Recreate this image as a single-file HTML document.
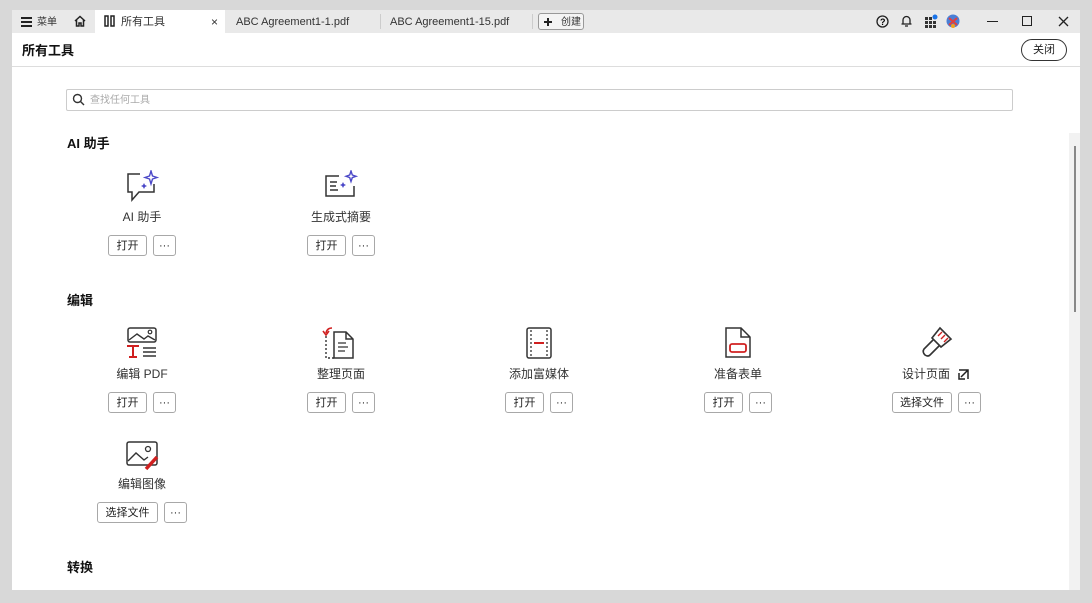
<!DOCTYPE html>
<html><head><meta charset="utf-8"><style>
*{margin:0;padding:0;box-sizing:border-box}
body{width:1092px;height:603px;background:#d8d8d8;position:relative;overflow:hidden;font-family:"Liberation Sans","Noto Sans CJK SC",sans-serif;color:#222}
.a{position:absolute}
.tabbar{left:12px;top:10px;width:1068px;height:23px;background:#e9e9e9}
.main{left:12px;top:33px;width:1068px;height:557px;background:#fff}
.t{font-size:11px;color:#333;white-space:nowrap;line-height:13px}
.btn{position:absolute;height:21px;border:1px solid #a8a8a8;border-radius:3px;background:#fff;font-size:11px;color:#222;text-align:center;line-height:20px}
.lbl{position:absolute;width:160px;text-align:center;font-size:12px;color:#333;line-height:14px}
.h{position:absolute;left:67px;font-size:13px;font-weight:bold;color:#111;line-height:15px}
svg{position:absolute}
</style></head><body>
<div class="a tabbar"></div>
<div class="a" style="left:95px;top:10px;width:130px;height:23px;background:#fff"></div>
<div class="a" style="left:380px;top:14px;width:1px;height:15px;background:#ccc"></div>
<div class="a" style="left:532px;top:14px;width:1px;height:15px;background:#ccc"></div>
<div class="a" style="left:21px;top:17px;width:11px;height:1.5px;background:#222"></div>
<div class="a" style="left:21px;top:21px;width:11px;height:1.5px;background:#222"></div>
<div class="a" style="left:21px;top:25px;width:11px;height:1.5px;background:#222"></div>
<div class="a t" style="left:37px;top:16px;font-size:10px">菜单</div>
<svg style="left:73px;top:14px" width="14" height="14" viewBox="0 0 14 14"><path d="M2 7 L7 2.5 L12 7 M3.5 6 V12 H6 V9 H8 V12 H10.5 V6" fill="none" stroke="#222" stroke-width="1.5"/></svg>
<svg style="left:104px;top:15px" width="12" height="12" viewBox="0 0 12 12"><rect x="1" y="1" width="3" height="10" fill="none" stroke="#222" stroke-width="1.5"/><rect x="7" y="1" width="3" height="10" fill="none" stroke="#222" stroke-width="1.5"/></svg>
<div class="a t" style="left:121px;top:16px">所有工具</div>
<div class="a t" style="left:211px;top:16px;font-size:12px">×</div>
<div class="a t" style="left:236px;top:16px">ABC Agreement1-1.pdf</div>
<div class="a t" style="left:390px;top:16px">ABC Agreement1-15.pdf</div>
<div class="a" style="left:538px;top:13px;width:46px;height:17px;border:1px solid #999;border-radius:3px;background:#f4f4f4"></div>
<div class="a" style="left:544px;top:21px;width:8px;height:1.5px;background:#222"></div>
<div class="a" style="left:547.3px;top:17.5px;width:1.5px;height:8px;background:#222"></div>
<div class="a t" style="left:561px;top:16px;font-size:10px">创建</div>
<svg style="left:876px;top:15px" width="13" height="13"><circle cx="6.5" cy="6.5" r="5.5" fill="none" stroke="#222" stroke-width="1.3"/><text x="4" y="10" font-size="9" font-weight="bold" font-family="Liberation Sans">?</text></svg>
<svg style="left:900px;top:14px" width="13" height="14"><path d="M3 10 V6 a3.5 3.5 0 0 1 7 0 V10 H11.5 H1.5 Z M5 12 H8" fill="none" stroke="#222" stroke-width="1.3"/></svg>
<svg style="left:924px;top:14px" width="14" height="14"><g fill="#333"><rect x="1" y="3" width="3" height="3"/><rect x="5" y="3" width="3" height="3"/><rect x="1" y="7" width="3" height="3"/><rect x="5" y="7" width="3" height="3"/><rect x="9" y="7" width="3" height="3"/><rect x="1" y="11" width="3" height="3"/><rect x="5" y="11" width="3" height="3"/><rect x="9" y="11" width="3" height="3"/></g><circle cx="11" cy="3" r="2.5" fill="#1a73e8"/></svg>
<svg style="left:946px;top:14px" width="14" height="14"><circle cx="7" cy="7" r="6.5" fill="#4a7fd6"/><path d="M3 4 L11 11 M11 4 L3 11" stroke="#e04040" stroke-width="2"/><circle cx="7" cy="12" r="2" fill="#f0a020"/></svg>
<div class="a" style="left:987px;top:21px;width:11px;height:1px;background:#222"></div>
<div class="a" style="left:1022px;top:16px;width:10px;height:10px;border:1px solid #222"></div>
<svg style="left:1058px;top:16px" width="11" height="11"><path d="M1 1 L10 10 M10 1 L1 10" stroke="#222" stroke-width="1.3"/></svg>
<div class="a main"></div>
<div class="a" style="left:12px;top:66px;width:1068px;height:1px;background:#ddd"></div>
<div class="a" style="left:22px;top:43px;font-size:13px;font-weight:bold;color:#111;line-height:15px">所有工具</div>
<div class="a" style="left:1021px;top:39px;width:46px;height:22px;border:1.5px solid #333;border-radius:11px;font-size:11px;text-align:center;line-height:20px">关闭</div>
<div class="a" style="left:1069px;top:133px;width:11px;height:457px;background:#f2f2f2"></div>
<div class="a" style="left:1074px;top:146px;width:2px;height:166px;background:#888"></div>
<div class="a" style="left:66px;top:89px;width:947px;height:22px;border:1px solid #ccc;border-radius:2px"></div>
<svg style="left:72px;top:93px" width="13" height="13"><circle cx="5.5" cy="5.5" r="4" fill="none" stroke="#333" stroke-width="1.4"/><path d="M8.5 8.5 L12 12" stroke="#333" stroke-width="1.4"/></svg>
<div class="a t" style="left:90px;top:94px;font-size:10px;color:#aaa">查找任何工具</div>
<div class="h" style="top:136px">AI 助手</div>
<div class="h" style="top:293px">编辑</div>
<div class="h" style="top:560px">转换</div>

<svg style="left:126px;top:170px" width="34" height="34" viewBox="0 0 34 34"><path d="M14 4 H2 V22 H6 V30 L13 22 H28 V14" fill="none" stroke="#333" stroke-width="1.5"/><path d="M25 1 L26.5 6 L31 7.5 L26.5 9 L25 14 L23.5 9 L19 7.5 L23.5 6 Z" fill="none" stroke="#4b48c8" stroke-width="1.4"/><path d="M18 13 l1 2 l2 1 l-2 1 l-1 2 l-1-2 l-2-1 l2-1z" fill="#4b48c8"/></svg>
<div class="lbl" style="left:62px;top:210px">AI 助手</div>
<div class="btn" style="left:108px;top:235px;width:39px">打开</div>
<div class="btn" style="left:153px;top:235px;width:23px">···</div>

<svg style="left:324px;top:170px" width="34" height="30" viewBox="0 0 34 30"><path d="M15 6 H2 V26 H30 V16" fill="none" stroke="#333" stroke-width="1.5"/><path d="M6 12 H13 M6 16 H12 M6 20 H14" stroke="#333" stroke-width="1.4"/><path d="M27 1 L28.3 5 L32 6.3 L28.3 7.6 L27 11.5 L25.7 7.6 L22 6.3 L25.7 5 Z" fill="none" stroke="#4b48c8" stroke-width="1.4"/><path d="M19 12 l1 2 l2 1 l-2 1 l-1 2 l-1-2 l-2-1 l2-1z" fill="#4b48c8"/></svg>
<div class="lbl" style="left:261px;top:210px">生成式摘要</div>
<div class="btn" style="left:307px;top:235px;width:39px">打开</div>
<div class="btn" style="left:352px;top:235px;width:23px">···</div>

<svg style="left:126px;top:327px" width="34" height="32" viewBox="0 0 34 32"><rect x="2" y="1" width="28" height="14" rx="2" fill="none" stroke="#333" stroke-width="1.5"/><path d="M3 13 L11 7 L18 12 L22 9 L29 13" fill="none" stroke="#333" stroke-width="1.4"/><circle cx="24" cy="5" r="1.8" fill="none" stroke="#333" stroke-width="1.2"/><path d="M1 19 H13 M7 19 V30 M3 30 H11" stroke="#d02020" stroke-width="2"/><path d="M17 21 H30 M17 25 H30 M17 29 H30" stroke="#333" stroke-width="1.4"/></svg>
<div class="lbl" style="left:62px;top:367px">编辑 PDF</div>
<div class="btn" style="left:108px;top:392px;width:39px">打开</div>
<div class="btn" style="left:153px;top:392px;width:23px">···</div>

<svg style="left:322px;top:326px" width="36" height="34" viewBox="0 0 36 34"><path d="M4 10 V32 H12" fill="none" stroke="#333" stroke-width="1.4" stroke-dasharray="2 2"/><path d="M12 6 H24 L31 13 V32 H12 Z M24 6 V13 H31" fill="none" stroke="#333" stroke-width="1.5"/><path d="M16 17 H24 M16 21 H26 M16 25 H23" stroke="#333" stroke-width="1.3"/><path d="M10 2 Q5 2 4 7" fill="none" stroke="#d02020" stroke-width="1.6"/><path d="M1 5 L4 9 L7 5" fill="none" stroke="#d02020" stroke-width="1.6"/></svg>
<div class="lbl" style="left:261px;top:367px">整理页面</div>
<div class="btn" style="left:307px;top:392px;width:39px">打开</div>
<div class="btn" style="left:352px;top:392px;width:23px">···</div>

<svg style="left:526px;top:327px" width="26" height="32" viewBox="0 0 26 32"><rect x="1" y="1" width="24" height="30" rx="2" fill="none" stroke="#333" stroke-width="1.5"/><path d="M5 3 V29 M21 3 V29" stroke="#333" stroke-width="1.3" stroke-dasharray="2 2"/><path d="M8 16 H18" stroke="#d02020" stroke-width="2"/></svg>
<div class="lbl" style="left:459px;top:367px">添加富媒体</div>
<div class="btn" style="left:505px;top:392px;width:39px">打开</div>
<div class="btn" style="left:550px;top:392px;width:23px">···</div>

<svg style="left:724px;top:327px" width="28" height="32" viewBox="0 0 28 32"><path d="M2 1 H17 L26 10 V30 H2 Z M17 1 V10 H26" fill="none" stroke="#333" stroke-width="1.5"/><rect x="6" y="17" width="16" height="8" rx="2" fill="none" stroke="#d02020" stroke-width="1.8"/></svg>
<div class="lbl" style="left:658px;top:367px">准备表单</div>
<div class="btn" style="left:704px;top:392px;width:39px">打开</div>
<div class="btn" style="left:749px;top:392px;width:23px">···</div>

<svg style="left:920px;top:326px" width="34" height="34" viewBox="0 0 34 34"><path d="M20 2 L31 13 L21 21 L12 12 Z" fill="none" stroke="#333" stroke-width="1.6"/><path d="M22 6 L18 10 M25 9 L21 13 M28 12 L24 16" stroke="#d02020" stroke-width="1.4"/><path d="M13 14 L4 23 Q2 26 5 29 Q8 31 10 29 L19 20" fill="none" stroke="#333" stroke-width="1.6"/></svg>
<div class="lbl" style="left:846px;top:367px">设计页面</div>
<svg style="left:958px;top:369px" width="11" height="11"><path d="M1 1 H10 V10 M10 1 L3 8 M1 4 V10 H7" fill="none" stroke="#222" stroke-width="1.5"/></svg>
<div class="btn" style="left:892px;top:392px;width:60px">选择文件</div>
<div class="btn" style="left:958px;top:392px;width:23px">···</div>

<svg style="left:126px;top:441px" width="34" height="30" viewBox="0 0 34 30"><rect x="1" y="1" width="30" height="23" rx="2" fill="none" stroke="#333" stroke-width="1.5"/><path d="M2 20 L10 12 L18 19 L22 16" fill="none" stroke="#333" stroke-width="1.4"/><circle cx="22" cy="8" r="2.5" fill="none" stroke="#333" stroke-width="1.3"/><path d="M20 28 L31 16" stroke="#d02020" stroke-width="3.5"/></svg>
<div class="lbl" style="left:62px;top:477px">编辑图像</div>
<div class="btn" style="left:97px;top:502px;width:61px">选择文件</div>
<div class="btn" style="left:164px;top:502px;width:23px">···</div>
</body></html>
